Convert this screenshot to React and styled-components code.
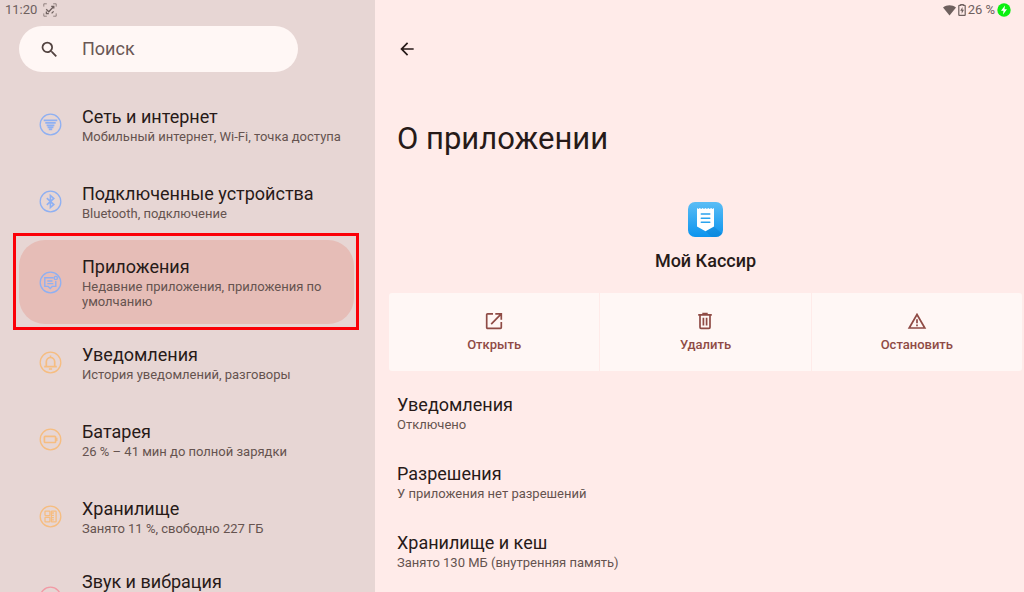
import React from "react";
import styled, { createGlobalStyle } from "styled-components";

const GlobalStyle = createGlobalStyle`
  *, *::before, *::after { box-sizing: border-box; }
  body {
    margin: 0;
    background: #ffebe9;
    color: #271a18;
    font-family: Roboto, "Noto Sans", sans-serif;
  }
  a { color: inherit; text-decoration: none; }
  h1, h2, p { margin: 0; font-weight: 400; }
  svg { display: block; flex: none; }
`;

const Screen = styled.div`
  display: grid;
  grid-template-columns: 375fr 649fr;
  height: 100vh;
  overflow: hidden;
`;

const Sidebar = styled.aside`
  display: flex;
  flex-direction: column;
  min-width: 0;
  overflow: hidden;
  padding: 0 21px 0 19px;
  background: #e7d6d4;
`;

const Main = styled.main`
  display: flex;
  flex-direction: column;
  min-width: 0;
  overflow: hidden;
  padding: 0 2px 0 14px;
  background: #ffebe9;
`;

const StatusBar = styled.div`
  flex: none;
  display: flex;
  align-items: center;
  justify-content: ${(p) => (p.$end ? "flex-end" : "flex-start")};
  gap: ${(p) => (p.$end ? "2px" : "6px")};
  height: 20px;
  margin: ${(p) => (p.$end ? "0 11px 0 0" : "0 0 0 -14px")};
  font-size: 13px;
  line-height: 20px;
  color: #6e605e;
`;

const SearchField = styled.label`
  flex: none;
  display: flex;
  align-items: center;
  gap: 22px;
  width: 100%;
  max-width: 279px;
  height: 46px;
  margin-top: 6px;
  padding: 0 22px 0 20px;
  border-radius: 23px;
  background: #fff7f5;
  color: #524340;
`;

const SearchInput = styled.input`
  flex: 1;
  min-width: 0;
  padding: 0;
  border: 0;
  outline: 0;
  background: transparent;
  color: #271a18;
  font: 18px/24px Roboto, "Noto Sans", sans-serif;
  &::placeholder { color: #6a5855; opacity: 1; }
`;

const Menu = styled.nav`
  display: flex;
  flex-direction: column;
  padding-top: 14px;
`;

const MenuItem = styled.a`
  position: relative;
  flex: none;
  display: flex;
  align-items: center;
  gap: 20px;
  min-height: ${(p) => (p.$tall ? "84px" : "77px")};
  padding: 15px 10px 15px 20px;
  border-radius: 26px;
  background: ${(p) => (p.$selected ? "#e6bdb7" : "transparent")};
`;

const Marker = styled.span`
  position: absolute;
  inset: -7px -5px -6px -6px;
  border: 3px solid #fb0007;
  pointer-events: none;
`;

const MenuText = styled.div`
  min-height: ${(p) => (p.$tall ? "54px" : "39px")};
`;

const ItemTitle = styled.p`
  font-size: 18px;
  line-height: 24px;
`;

const ItemNote = styled.p`
  font-size: 13px;
  line-height: 15px;
  color: #65534f;
`;

const BackButton = styled.button`
  flex: none;
  align-self: flex-start;
  display: grid;
  place-items: center;
  width: 36px;
  height: 36px;
  margin-top: 11px;
  padding: 0;
  border: 0;
  background: transparent;
  color: #271a18;
`;

const PageTitle = styled.h1`
  margin-top: 52px;
  padding-left: 8px;
  font-size: 31px;
  line-height: 40px;
`;

const AppCard = styled.section`
  display: flex;
  flex-direction: column;
  align-items: center;
  gap: 12px;
  margin-top: 43px;
`;

const AppName = styled.h2`
  font-size: 18px;
  line-height: 24px;
  font-weight: 500;
`;

const Actions = styled.div`
  display: grid;
  grid-template-columns: repeat(3, 1fr);
  gap: 1px;
  margin-top: 20px;
  border-radius: 3px;
  overflow: hidden;
`;

const ActionButton = styled.button`
  display: flex;
  flex-direction: column;
  align-items: center;
  gap: 6px;
  height: 78px;
  padding: 18px 8px;
  border: 0;
  background: #fff7f5;
  color: #8f4b45;
  font: 500 13px/16px Roboto, "Noto Sans", sans-serif;
`;

const Options = styled.div`
  display: flex;
  flex-direction: column;
  gap: 30px;
  margin-top: 22px;
  padding-left: 8px;
`;

const Option = styled.a`
  display: block;
`;

const BLUE = "#8fb0f2";
const ORANGE = "#f6bd80";
const PINK = "#f29aa5";

function RoundIcon({ color, children }) {
  return (
    <svg width="23" height="23" viewBox="0 0 23 23" fill="none" stroke={color} strokeWidth="1.3" aria-hidden="true">
      <circle cx="11.5" cy="11.5" r="10.3" />
      {children}
    </svg>
  );
}

const NetworkIcon = () => (
  <RoundIcon color={BLUE}>
    <path d="M4.7 7.3h13.6M6.3 9.9h10.4M7.6 12.3h7.8M8.6 14.4h5.8M9.8 16.3h3.4" strokeWidth="1.8" />
  </RoundIcon>
);

const BluetoothIcon = () => (
  <RoundIcon color={BLUE}>
    <path d="M7.8 8.2l7 6.4-3.4 3V5.4l3.4 3-7 6.4" strokeWidth="1.6" />
  </RoundIcon>
);

const AppsIcon = () => (
  <RoundIcon color={BLUE}>
    <path d="M14.6 6.7H5.8v8.7h3.4l2 2 2-2h3.6v-5.5M8.3 10h5.2M8.3 12.6h6" strokeWidth="1.4" />
    <circle cx="16.8" cy="7" r="1.6" />
  </RoundIcon>
);

const BellIcon = () => (
  <RoundIcon color={ORANGE}>
    <path d="M5.2 15.7h12.6M7.3 15.5v-4.8a4.2 4.2 0 0 1 8.4 0v4.8M11.5 6.2V4.6M9.9 18h3.2" strokeWidth="1.7" />
  </RoundIcon>
);

const BatteryIcon = () => (
  <RoundIcon color={ORANGE}>
    <rect x="5.4" y="8.3" width="11.2" height="6.2" rx="0.8" strokeWidth="1.7" />
    <path d="M17.8 9.8v3.2" strokeWidth="1.4" />
  </RoundIcon>
);

const StorageIcon = () => (
  <RoundIcon color={ORANGE}>
    <rect x="6" y="6.1" width="4.9" height="4.5" rx="0.5" />
    <rect x="6" y="12.4" width="4.9" height="4.5" rx="0.5" />
    <rect x="12.4" y="6.1" width="4.7" height="10.8" rx="0.5" />
    <path d="M12.5 8h2.4M12.5 10.3h2.4M12.5 12.6h2.4M12.5 14.8h2.4" strokeWidth="1.3" />
  </RoundIcon>
);

const SoundIcon = () => (
  <RoundIcon color={PINK}>
    <path d="M9 9.5v4M11.5 8v7M14 9.5v4" />
  </RoundIcon>
);

const ScanIcon = () => (
  <svg width="14" height="14" viewBox="0 0 14 14" fill="none" stroke="currentColor" aria-hidden="true">
    <path d="M.8 3.6V.8h3M10.2.8h3v2.8M13.2 10.4v2.8h-3M3.8 13.2h-3v-2.8" strokeWidth="1" opacity=".7" />
    <path d="M3.2 6.2l2.6 2.5L10.6 3.5M8.2 3.3h2.6v2.3M3.4 8.5v2.1h2.4M8.6 10.4l2-2" strokeWidth="1.3" />
  </svg>
);

const WifiIcon = () => (
  <svg width="13" height="11" viewBox="0 0 13 11" fill="currentColor" aria-hidden="true">
    <path d="M0 2.6C3.7-.5 9.3-.5 13 2.6L6.5 10.6z" />
  </svg>
);

const ChargeIcon = () => (
  <svg width="8" height="12" viewBox="0 0 8 12" fill="none" stroke="currentColor" aria-hidden="true">
    <path d="M2.8 1.3V.6h2.4v.7h1.4a.6.6 0 0 1 .6.6v8.9a.6.6 0 0 1-.6.6H1.4a.6.6 0 0 1-.6-.6V1.9a.6.6 0 0 1 .6-.6z" strokeWidth="1.2" />
    <path d="M4.5 3L2.2 6.8h1.5V9.8L6 5.8H4.5z" fill="currentColor" stroke="none" />
  </svg>
);

const PowerBadge = () => (
  <svg width="14" height="14" viewBox="0 0 14 14" aria-hidden="true">
    <circle cx="7" cy="7" r="6.7" fill="#0bf00f" />
    <path d="M8 2.6L4 7.7h2.5L6 11.4l4-5.1H7.5z" fill="#fff" />
  </svg>
);

const SearchIcon = () => (
  <svg width="21" height="21" viewBox="0 0 24 24" fill="currentColor" aria-hidden="true">
    <path d="M15.5 14h-.79l-.28-.27A6.47 6.47 0 0 0 16 9.5 6.5 6.5 0 1 0 9.5 16c1.61 0 3.09-.59 4.23-1.57l.27.28v.79l5 4.99L20.49 19zm-6 0C7.01 14 5 11.99 5 9.5S7.01 5 9.5 5 14 7.01 14 9.5 11.99 14 9.5 14z" />
  </svg>
);

const BackIcon = () => (
  <svg width="20" height="20" viewBox="0 0 24 24" fill="currentColor" aria-hidden="true">
    <path d="M20 11H7.83l5.59-5.59L12 4l-8 8 8 8 1.41-1.41L7.83 13H20z" />
  </svg>
);

const AppLogo = () => (
  <svg width="35" height="35" viewBox="0 0 35 35" role="img" aria-label="Мой Кассир">
    <defs>
      <linearGradient id="logoFill" x1="0" y1="0" x2="0" y2="1">
        <stop offset="0" stopColor="#5bbdf5" />
        <stop offset="1" stopColor="#0c94ee" />
      </linearGradient>
      <linearGradient id="logoShade" x1="0" y1="0" x2="1" y2="1">
        <stop offset="0" stopColor="#0a7ccc" stopOpacity=".3" />
        <stop offset="1" stopColor="#0a7ccc" stopOpacity=".5" />
      </linearGradient>
      <clipPath id="logoClip"><rect width="35" height="35" rx="7" /></clipPath>
    </defs>
    <g clipPath="url(#logoClip)">
      <rect width="35" height="35" fill="url(#logoFill)" />
      <path d="M26 24.500l9 8V35H23.500l-6-5.700z" fill="url(#logoShade)" />
    </g>
    <path d="M9 6l1.400.9L11.800 6l1.400.9L14.600 6l1.400.9L17.500 6l1.400.9L20.300 6l1.400.9L23.100 6l1.400.9L26 6v18.500l-8.500 4.800L9 24.500z" fill="#fff" />
    <path d="M13.300 12h8.500M13.300 16.200h8.500M13.300 20.300h8.500" stroke="#2ba3ee" strokeWidth="1.500" strokeLinecap="round" />
  </svg>
);

const OpenIcon = () => (
  <svg width="20" height="20" viewBox="0 0 20 20" fill="none" stroke="currentColor" strokeWidth="1.700" aria-hidden="true">
    <path d="M9 2.800H3.600a.9.900 0 0 0-.9.900v12.800a.9.900 0 0 0 .9.900h12.800a.9.900 0 0 0 .9-.9V11M11.300 2.800h6v6M17 3.100L7.200 13.200" />
  </svg>
);

const DeleteIcon = () => (
  <svg width="20" height="20" viewBox="0 0 20 20" fill="none" stroke="currentColor" strokeWidth="1.700" aria-hidden="true">
    <path d="M3.200 3.800h13.600M7.300 2.700h5.400M5 4v12.300a1 1 0 0 0 1 1h8a1 1 0 0 0 1-1V4M8.400 6.700v7.700M11.600 6.700v7.700" />
  </svg>
);

const StopIcon = () => (
  <svg width="20" height="20" viewBox="0 0 20 20" fill="none" stroke="currentColor" strokeWidth="1.700" aria-hidden="true">
    <path d="M10 3.500L2.200 17h15.600zM10 8.300v4M10 13.600v1.600" />
  </svg>
);

const menu = [
  { title: "Сеть и интернет", note: "Мобильный интернет, Wi-Fi, точка доступа", Icon: NetworkIcon },
  { title: "Подключенные устройства", note: "Bluetooth, подключение", Icon: BluetoothIcon },
  { title: "Приложения", note: "Недавние приложения, приложения по умолчанию", Icon: AppsIcon, tall: true, selected: true },
  { title: "Уведомления", note: "История уведомлений, разговоры", Icon: BellIcon },
  { title: "Батарея", note: "26 % – 41 мин до полной зарядки", Icon: BatteryIcon },
  { title: "Хранилище", note: "Занято 11 %, свободно 227 ГБ", Icon: StorageIcon },
  { title: "Звук и вибрация", Icon: SoundIcon, tall: true },
];

const actions = [
  { label: "Открыть", Icon: OpenIcon },
  { label: "Удалить", Icon: DeleteIcon },
  { label: "Остановить", Icon: StopIcon },
];

const options = [
  { title: "Уведомления", note: "Отключено" },
  { title: "Разрешения", note: "У приложения нет разрешений" },
  { title: "Хранилище и кеш", note: "Занято 130 МБ (внутренняя память)" },
];

export default function App() {
  return (
    <>
      <GlobalStyle />
      <Screen>
        <Sidebar>
          <StatusBar>
            <span>11:20</span>
            <ScanIcon />
          </StatusBar>
          <SearchField>
            <SearchIcon />
            <SearchInput type="search" placeholder="Поиск" aria-label="Поиск" />
          </SearchField>
          <Menu>
            {menu.map(({ title, note, Icon, tall, selected }) => (
              <MenuItem key={title} href="#" $tall={tall} $selected={selected} aria-current={selected ? "page" : undefined}>
                <Icon />
                <MenuText $tall={tall}>
                  <ItemTitle>{title}</ItemTitle>
                  {note && <ItemNote>{note}</ItemNote>}
                </MenuText>
                {selected && <Marker />}
              </MenuItem>
            ))}
          </Menu>
        </Sidebar>
        <Main>
          <StatusBar $end>
            <WifiIcon />
            <ChargeIcon />
            <span>26 %</span>
            <PowerBadge />
          </StatusBar>
          <BackButton type="button" aria-label="Назад">
            <BackIcon />
          </BackButton>
          <PageTitle>О приложении</PageTitle>
          <AppCard>
            <AppLogo />
            <AppName>Мой Кассир</AppName>
          </AppCard>
          <Actions>
            {actions.map(({ label, Icon }) => (
              <ActionButton key={label} type="button">
                <Icon />
                {label}
              </ActionButton>
            ))}
          </Actions>
          <Options>
            {options.map(({ title, note }) => (
              <Option key={title} href="#">
                <ItemTitle>{title}</ItemTitle>
                <ItemNote>{note}</ItemNote>
              </Option>
            ))}
          </Options>
        </Main>
      </Screen>
    </>
  );
}
